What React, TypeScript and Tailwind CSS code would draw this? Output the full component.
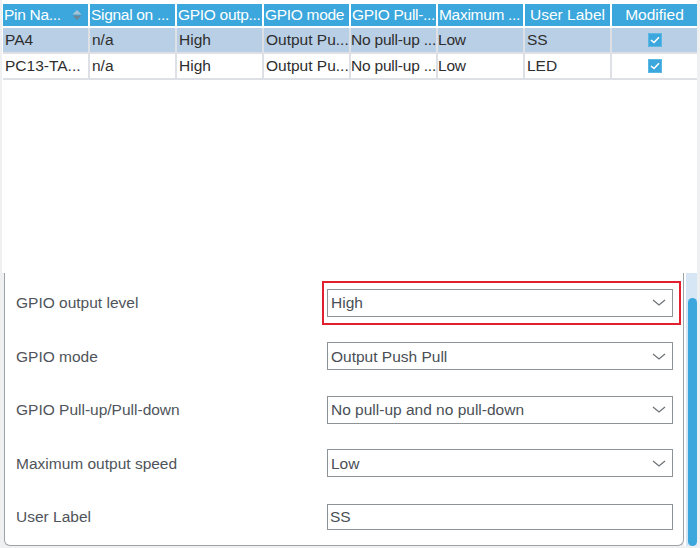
import React from "react";

const headers: { t: string; center?: boolean; sort?: boolean }[] = [
  { t: "Pin Na...", sort: true },
  { t: "Signal on ..." },
  { t: "GPIO outp..." },
  { t: "GPIO mode" },
  { t: "GPIO Pull-..." },
  { t: "Maximum ..." },
  { t: "User Label", center: true },
  { t: "Modified", center: true },
];

const rows = [
  ["PA4", "n/a", "High", "Output Pu...", "No pull-up ...", "Low", "SS"],
  ["PC13-TA...", "n/a", "High", "Output Pu...", "No pull-up ...", "Low", "LED"],
];

function SortIcon() {
  return (
    <svg width="10" height="12" viewBox="0 0 10 12" className="shrink-0">
      <path d="M0.5 5.5 L5 1 L9.5 5.5 Z" fill="#a9c3d3" />
      <path d="M0.5 6.5 L9.5 6.5 L5 11 Z" fill="#6e8797" />
    </svg>
  );
}

function Check() {
  return (
    <div className="w-[14px] h-[14px] bg-[#3ba7dc] border border-[#5bb7e4] flex items-center justify-center">
      <svg width="10" height="8" viewBox="0 0 10 8">
        <path d="M1 4 L4 6.5 L9 1.2" stroke="white" strokeWidth="1.6" fill="none" />
      </svg>
    </div>
  );
}

function Chevron() {
  return (
    <svg width="14" height="7" viewBox="0 0 14 7">
      <path d="M1 1 L7 6 L13 1" stroke="#6f747a" strokeWidth="1.3" fill="none" />
    </svg>
  );
}

function Select({ value, highlight }: { value: string; highlight?: boolean }) {
  return (
    <div className="relative">
      <div className="w-[346px] h-[28px] border border-[#8e9398] bg-white flex items-center justify-between pl-[3px] pr-[6px] text-[15.5px] text-[#4a4f56]">
        <span>{value}</span>
        <Chevron />
      </div>
      {highlight && (
        <div className="absolute -left-[5px] -top-[8px] -bottom-[8px] -right-[8px] border-2 border-[#e21f2e]" />
      )}
    </div>
  );
}

const props = [
  { label: "GPIO output level", value: "High", highlight: true },
  { label: "GPIO mode", value: "Output Push Pull" },
  { label: "GPIO Pull-up/Pull-down", value: "No pull-up and no pull-down" },
  { label: "Maximum output speed", value: "Low" },
];

export default function App() {
  return (
    <div className="w-[700px] h-[548px] bg-[#eef0f2] overflow-hidden font-['Liberation_Sans',Arial,sans-serif]">
      {/* table */}
      <div className="ml-[2px] w-[695px] h-[273px] bg-white pt-[4px] pl-[1px]">
        <div className="flex gap-[2px] bg-white">
          {headers.map((h, i) => (
            <div
              key={i}
              className={`w-[85px] h-[22px] bg-[#3ba7dc] text-white text-[15.5px] leading-[22px] whitespace-nowrap overflow-hidden flex items-center ${h.center ? "justify-center" : "pl-[1px] tracking-[-0.3px]"} ${h.sort ? "justify-between pr-[6px]" : ""}`}
            >
              <span>{h.t}</span>
              {h.sort && <SortIcon />}
            </div>
          ))}
        </div>
        <div className="mt-[2px] flex flex-col gap-[2px] bg-[#dde1e5] pb-[2px] w-[694px]">
          {rows.map((r, ri) => (
            <div key={ri} className="flex gap-[2px]">
              {r.map((c, ci) => (
                <div
                  key={ci}
                  className={`w-[85px] h-[24px] ${ri === 0 ? "bg-[#b9cfe5]" : "bg-white"} text-[15.5px] text-[#2e2e2e] leading-[24px] whitespace-nowrap ${ci === 4 || ci === 5 ? "pl-0 tracking-[-0.2px]" : "pl-[2px] overflow-hidden"}`}
                >
                  {c}
                </div>
              ))}
              <div className={`w-[85px] h-[24px] ${ri === 0 ? "bg-[#b9cfe5]" : "bg-white"} flex items-center justify-center`}>
                <Check />
              </div>
            </div>
          ))}
        </div>
      </div>

      {/* lower section */}
      <div className="flex h-[273px]">
        <div className="ml-[4px] w-[680px] h-[273px] bg-white border-x border-b border-[#9ea3a8] rounded-b-[6px] pt-[3px]">
          {props.map((p, i) => (
            <div key={i} className="h-[53.5px] flex items-center">
              <div className="w-[322px] pl-[11px] text-[15.5px] text-[#4f545a]">{p.label}</div>
              <Select value={p.value} highlight={p.highlight} />
            </div>
          ))}
          <div className="h-[53.5px] flex items-center">
            <div className="w-[322px] pl-[11px] text-[15.5px] text-[#4f545a]">User Label</div>
            <div className="w-[346px] h-[26px] border border-[#8e9398] flex items-center pl-[2px] text-[15.5px] text-[#4a4f56]">
              SS
            </div>
          </div>
        </div>
        <div className="w-[2px] h-[273px] bg-white" />
        <div className="w-[11px] h-[273px] bg-[#d6e6f4] pt-[25px] pl-[2px] flex flex-col">
          <div className="flex-1 w-[9px] rounded-full bg-[#3ba7dc]" />
        </div>
      </div>
    </div>
  );
}
